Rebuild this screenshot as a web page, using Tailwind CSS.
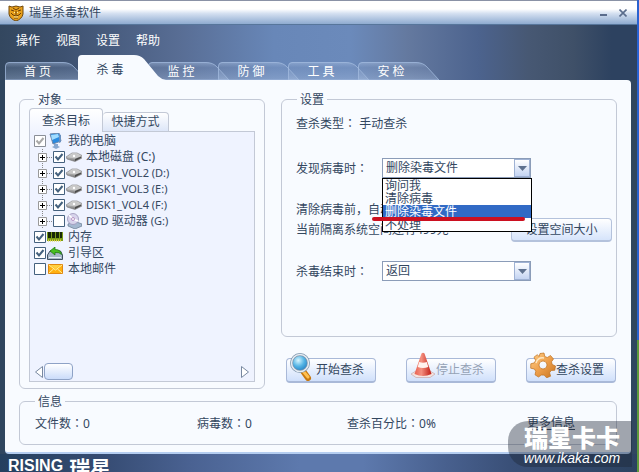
<!DOCTYPE html>
<html lang="zh-CN">
<head>
<meta charset="utf-8">
<title>瑞星杀毒软件</title>
<script src="https://cdn.jsdelivr.net/npm/@tailwindcss/browser@4"></script>
</head>
<body class="relative flex h-screen flex-col overflow-hidden border-r-2 border-[#2a62d0] bg-[#30465f] font-['Noto_Sans','Noto_Sans_CJK_SC',sans-serif] text-[12px] leading-4 text-[#33475f]">
<svg class="absolute h-0 w-0" aria-hidden="true">
  <defs>
    <linearGradient id="tabfill" x1="0" y1="0" x2="0" y2="1"><stop offset="0" stop-color="#a9bfe0" stop-opacity=".5"/><stop offset=".3" stop-color="#8fa6cc" stop-opacity=".22"/><stop offset="1" stop-color="#a9bfe0" stop-opacity=".4"/></linearGradient>
    <linearGradient id="disk" x1="0" y1="0" x2="0" y2="1"><stop offset="0" stop-color="#eee"/><stop offset="1" stop-color="#777"/></linearGradient>
    <radialGradient id="lens" cx=".4" cy=".35" r=".7"><stop offset="0" stop-color="#d8f6ff"/><stop offset=".5" stop-color="#54b4e4"/><stop offset="1" stop-color="#1c78c0"/></radialGradient>
    <linearGradient id="gear" x1="0" y1="0" x2="1" y2="1"><stop offset="0" stop-color="#ffd08a"/><stop offset=".5" stop-color="#eea04c"/><stop offset="1" stop-color="#c87420"/></linearGradient>
    <linearGradient id="cone" x1="0" y1="0" x2="1" y2="0"><stop offset="0" stop-color="#e86050"/><stop offset=".4" stop-color="#f49080"/><stop offset="1" stop-color="#c01c14"/></linearGradient>
    <symbol id="tab" viewBox="0 0 84 18"><path d="M.5 18V4Q.5 .5 4 .5H58Q65 .5 69 5L81 18Z" fill="url(#tabfill)" stroke="#a4bce0" stroke-opacity=".75"/></symbol>
    <symbol id="drive" viewBox="0 0 16 10"><path d="M0 5 6 1H11L16 3.500V6L9 9.500 1 7Z" fill="url(#disk)" stroke="#777" stroke-width=".6"/><path d="M1 5 6 2h5l4 2-6 2.500Z" fill="#c8c8c8"/><path d="M9 7v2l6-3V4.500Z" fill="#4c4c4c"/><circle cx="8" cy="4" r="1.200" fill="#fff"/></symbol>
    <symbol id="plus" viewBox="0 0 15 16"><path d="M4.500 0v16M9 8.500h5" stroke="#888" stroke-dasharray="1 1"/><path d="M.5 4.500h8v8h-8Z" fill="#fff" stroke="#999"/><path d="M2 8.500h5M4.500 6v5" stroke="#000"/></symbol>
    <symbol id="box" viewBox="0 0 12 12"><path d="M.5 .5h11v11H.5Z" fill="#fff" stroke="#44617e"/></symbol>
    <symbol id="ticked" viewBox="0 0 12 12"><path d="M.5 .5h11v11H.5Z" fill="#fff" stroke="#44617e"/><path d="M2.500 5.500 5 8.500 9.500 3" stroke="#44617e" stroke-width="2" fill="none"/></symbol>
  </defs>
</svg>

<header class="flex h-[25px] shrink-0 items-center gap-1 border-b border-t border-b-[#57769b] border-t-[#8a92a6] bg-linear-to-b from-white from-35% via-[#d3dff0] via-55% to-[#8fabd0] pl-2 pr-1.5">
  <svg class="h-4 w-4" viewBox="0 0 16 16"><path d="M1 1 4 2Q8 0 12 2L15 1V9Q14 14 8 16 2 14 1 9Z" fill="#e8a01c" stroke="#70480c"/><path d="M3 5 6 6M13 5 10 6M5 3l3 2 3-2M8 6v4M5 10l3 1 3-1M6 13h4M3 8l2 2M13 8l-2 2" stroke="#6b3f08" fill="none"/><path d="M6 7.500h1M9 7.500h1M6 12h4" stroke="#fff0a0"/></svg>
  <h1 class="pl-px">瑞星杀毒软件</h1>
  <button class="ml-auto flex h-4 w-4 items-center justify-center" aria-label="最小化"><span class="mt-1 h-0.5 w-[7px] bg-[#5a6c8c]"></span></button>
  <button class="flex h-4 w-4 items-center justify-center" aria-label="关闭"><svg class="h-2 w-2" viewBox="0 0 8 8"><path d="M.5 .5 7.500 7.500M7.500 .5 .5 7.500" stroke="#5a6c8c" stroke-width="1.600"/></svg></button>
</header>

<div class="flex h-[55px] shrink-0 flex-col justify-between bg-linear-[90deg,#33475f_0%,#3d5170_10%,#586d94_28%,#6887b8_43%,#6b8abb_55%,#64799f_64%,#4c638e_75%,#475873_83%,#3f5068_90%,#2d4260_96%]">
  <nav class="flex gap-4 pl-4 pt-2 text-white">
    <a href="#">操作</a><a href="#">视图</a><a href="#">设置</a><a href="#">帮助</a>
  </nav>
  <div class="flex items-end pl-[5px] text-white" role="tablist">
    <button role="tab" class="relative h-[18px] w-[73px] pr-2 pt-0.5"><svg class="absolute left-0 top-0 h-[18px] w-[84px]"><use href="#tab"/></svg><span class="relative">首 页</span></button>
    <button role="tab" aria-selected="true" class="relative z-10 h-[25px] w-[70px] pr-[6px] pt-1 text-[#33475f]"><svg class="absolute left-0 top-0 h-[26px] w-[88px]" viewBox="0 0 88 26"><path d="M0 26V4Q0 0 4 0H56Q62 0 66 4L80 21Q83 24 88 25V26Z" fill="#f8fbff"/></svg><span class="relative">杀 毒</span></button>
    <button role="tab" class="relative h-[18px] w-[70px] pr-1 pt-0.5"><svg class="absolute left-0 top-0 h-[18px] w-[84px]"><use href="#tab"/></svg><span class="relative">监 控</span></button>
    <button role="tab" class="relative h-[18px] w-[70px] pr-1 pt-0.5"><svg class="absolute left-0 top-0 h-[18px] w-[84px]"><use href="#tab"/></svg><span class="relative">防 御</span></button>
    <button role="tab" class="relative h-[18px] w-[70px] pr-1 pt-0.5"><svg class="absolute left-0 top-0 h-[18px] w-[84px]"><use href="#tab"/></svg><span class="relative">工 具</span></button>
    <button role="tab" class="relative h-[18px] w-[70px] pr-1 pt-0.5"><svg class="absolute left-0 top-0 h-[18px] w-[84px]"><use href="#tab"/></svg><span class="relative">安 检</span></button>
  </div>
</div>

<main class="ml-[5px] mr-[6px] flex flex-1 flex-col gap-[3px] rounded-b-sm rounded-tr-sm border-b-2 border-[#b4cdf0] bg-[#f8fbff] px-[14px] pb-[7px] pt-[10px]">
  <div class="flex flex-1 gap-4">
    <fieldset class="flex w-[246px] flex-col rounded-md border border-[#c3c9d6] px-[9px] pb-[6px]">
      <legend class="ml-[5px] px-1 pt-0.5">对象</legend>
      <div class="flex h-full flex-col">
        <div class="flex items-end" role="tablist">
          <button role="tab" aria-selected="true" class="relative z-10 -mb-px h-6 w-[74px] rounded-t border border-b-0 border-[#c3c9d6] bg-linear-to-b from-white to-[#f0f4ff]">查杀目标</button>
          <button role="tab" class="h-[19px] w-[66px] rounded-t border border-b-0 border-l-0 border-[#c3c9d6] bg-linear-to-b from-white to-[#dde6f8]">快捷方式</button>
        </div>
        <div class="flex flex-1 flex-col justify-between border border-[#c3c9d6] bg-[#eff3ff] px-1">
          <ul class="pt-px">
            <li class="flex h-4 items-center"><input id="pc" type="checkbox" checked class="absolute h-3 w-3 opacity-0"><svg class="h-3 w-3" viewBox="0 0 12 12"><path d="M.5 .5h11v11H.5Z" fill="#fff" stroke="#8a8f98"/><path d="M2.500 5.500 5 8.500 9.500 3" stroke="#a8a8a8" stroke-width="2" fill="none"/></svg>
              <svg class="ml-0.5 h-4 w-4" viewBox="0 0 16 16"><path d="M2 1 11 0 13 8 5 11Z" fill="#2a8be0" stroke="#7088a8"/><path d="M3 2 10 1 11 4 4 7Z" fill="#a0dcff"/><path d="M11 1l2 1v7l-2 1Z" fill="#6890c0"/><path d="M6 11h4v2l2 1-4 2-4-2 2-1Z" fill="#88a8d0"/></svg>
              <label for="pc" class="pl-1">我的电脑</label></li>
            <li class="flex h-4 items-center pl-1"><svg class="h-4 w-[15px]"><use href="#plus"/></svg><input id="c" type="checkbox" checked class="absolute h-3 w-3 opacity-0"><svg class="h-3 w-3"><use href="#ticked"/></svg><svg class="ml-px h-[10px] w-4"><use href="#drive"/></svg><label for="c" class="pl-1">本地磁盘 (C:)</label></li>
            <li class="flex h-4 items-center pl-1"><svg class="h-4 w-[15px]"><use href="#plus"/></svg><input id="d" type="checkbox" checked class="absolute h-3 w-3 opacity-0"><svg class="h-3 w-3"><use href="#ticked"/></svg><svg class="ml-px h-[10px] w-4"><use href="#drive"/></svg><label for="d" class="pl-1 text-[11px]">DISK1_VOL2 (D:)</label></li>
            <li class="flex h-4 items-center pl-1"><svg class="h-4 w-[15px]"><use href="#plus"/></svg><input id="e" type="checkbox" checked class="absolute h-3 w-3 opacity-0"><svg class="h-3 w-3"><use href="#ticked"/></svg><svg class="ml-px h-[10px] w-4"><use href="#drive"/></svg><label for="e" class="pl-1 text-[11px]">DISK1_VOL3 (E:)</label></li>
            <li class="flex h-4 items-center pl-1"><svg class="h-4 w-[15px]"><use href="#plus"/></svg><input id="f" type="checkbox" checked class="absolute h-3 w-3 opacity-0"><svg class="h-3 w-3"><use href="#ticked"/></svg><svg class="ml-px h-[10px] w-4"><use href="#drive"/></svg><label for="f" class="pl-1 text-[11px]">DISK1_VOL4 (F:)</label></li>
            <li class="flex h-4 items-center pl-1"><svg class="h-4 w-[15px]"><use href="#plus"/></svg><input id="g" type="checkbox" class="absolute h-3 w-3 opacity-0"><svg class="h-3 w-3"><use href="#box"/></svg><svg class="ml-px h-4 w-4" viewBox="0 0 16 16"><path d="M2 11 8 8l8 3v2l-7 3-7-3Z" fill="#a4b8d0" stroke="#66788f" stroke-width=".7"/><circle cx="7" cy="6" r="5.500" fill="#d8d4ec" stroke="#9a94b8" stroke-width=".8"/><path d="M7 6 3 2M7 6l5 2" stroke="#fff" stroke-width="1.500"/><circle cx="7" cy="6" r="1.500" fill="#fff" stroke="#a070b0" stroke-width=".7"/></svg><label for="g" class="pl-1"><span class="text-[11px]">DVD</span> 驱动器 <span class="text-[11px]">(G:)</span></label></li>
            <li class="flex h-4 items-center"><input id="mem" type="checkbox" checked class="absolute h-3 w-3 opacity-0"><svg class="h-3 w-3"><use href="#ticked"/></svg>
              <svg class="ml-px h-3 w-4" viewBox="0 0 16 12"><path d="M0 1h16v9H0Z" fill="#7a9c18"/><path d="M1 1h3v6H1ZM5 1h3v6H5ZM9 1h3v6H9ZM13 1h2v6h-2Z" fill="#182808"/><path d="M1 9.500h14" stroke="#e0d040" stroke-width="2" stroke-dasharray="1 1"/></svg><label for="mem" class="pl-[5px]">内存</label></li>
            <li class="flex h-4 items-center"><input id="boot" type="checkbox" checked class="absolute h-3 w-3 opacity-0"><svg class="h-3 w-3"><use href="#ticked"/></svg>
              <svg class="ml-px h-[13px] w-4" viewBox="0 0 16 13"><path d="M.5 8 3 4h10.500l2 4v4.500H.5Z" fill="#a8b8c8" stroke="#405060"/><path d="M2 10.500h12" stroke="#e8f0f8"/><path d="M3 4 8 0v2.500q6 0 6.500 5-2-2.500-6.500-2V8Z" fill="#48c020" stroke="#187008" stroke-width=".7"/></svg><label for="boot" class="pl-[5px]">引导区</label></li>
            <li class="flex h-4 items-center"><input id="mail" type="checkbox" class="absolute h-3 w-3 opacity-0"><svg class="h-3 w-3"><use href="#box"/></svg>
              <svg class="ml-0.5 h-3 w-[15px]" viewBox="0 0 15 12"><path d="M.5 1.500h14v9H.5Z" fill="#ffb010" stroke="#e08810"/><path d="M2 2h11L7.500 6Z" fill="#ffd040"/><path d="M1 2l6.500 5L14 2M1 10l4.500-4M14 10 9.500 6" fill="none" stroke="#fff0a0"/></svg><label for="mail" class="pl-[5px]">本地邮件</label></li>
          </ul>
          <div class="flex items-center pb-px">
            <svg class="h-3 w-[10px]" viewBox="0 0 10 12"><path d="M8.500 .5 1.500 6l7 5.500Z" fill="#fff" stroke="#7888a0"/></svg>
            <span class="h-[17px] w-[29px] rounded-sm border border-[#8ea2c6] bg-linear-to-b from-white to-[#cbdcfa]"></span>
            <svg class="ml-auto h-3 w-[10px]" viewBox="0 0 10 12"><path d="M1.500 .5 8.500 6l-7 5.500Z" fill="#fff" stroke="#7888a0"/></svg>
          </div>
        </div>
      </div>
    </fieldset>

    <div class="flex flex-1 flex-col justify-between">
      <fieldset class="h-[247px] rounded-md border border-[#c3c9d6] pl-[14px] pr-1">
        <legend class="ml-px px-[3px] pt-0.5">设置</legend>
        <p class="pt-[7px]">查杀类型<span lang="zh-Hant" class="font-['Noto_Sans_CJK_TC']">：</span> 手动查杀</p>
        <div class="mt-[26px] flex items-center">
          <label for="found" class="w-[86px]">发现病毒时<span lang="zh-Hant" class="font-['Noto_Sans_CJK_TC']">：</span></label>
          <div class="relative w-[149px]">
            <select id="found" class="block h-5 w-full appearance-none border border-[#8b9cb8] bg-white pl-[3px]"><option>删除染毒文件</option></select>
            <span class="pointer-events-none absolute inset-y-px right-px flex w-4 items-center justify-center border border-[#9fb2d4] bg-linear-to-b from-white to-[#c4d4f2]"><svg class="h-[5px] w-[9px]" viewBox="0 0 9 5"><path d="M0 0h9L4.500 5Z" fill="#5e718f"/></svg></span>
            <ul role="listbox" aria-label="发现病毒时" class="absolute left-0 top-5 z-20 w-[150px] border border-black bg-white leading-[13px]">
              <li role="option" class="h-[13px] pl-0.5">询问我</li>
              <li role="option" class="h-[13px] pl-0.5">清除病毒</li>
              <li role="option" aria-selected="true" class="h-[13px] bg-[#316ac5] pl-0.5 text-white">删除染毒文件</li>
              <li role="option" class="h-[13px] pl-0.5">不处理</li>
            </ul>
            <span class="absolute -left-[10px] top-[59px] z-30 h-1 w-[153px] rounded-full bg-[#cc1020]"></span>
          </div>
        </div>
        <p class="mt-6">清除病毒前，自动备份到隔离区</p>
        <div class="flex h-6 items-center">
          <p>当前隔离系统空间还有499兆</p>
          <button class="ml-auto h-6 w-[101px] rounded border border-b-2 border-[#b4c2dc] bg-linear-to-b from-white to-[#d6e4fb]">设置空间大小</button>
        </div>
        <div class="mt-[19px] flex items-center">
          <label for="finish" class="w-[86px]">杀毒结束时<span lang="zh-Hant" class="font-['Noto_Sans_CJK_TC']">：</span></label>
          <div class="relative w-[149px]">
            <select id="finish" class="block h-5 w-full appearance-none border border-[#8b9cb8] bg-white pl-[3px]"><option>返回</option></select>
            <span class="pointer-events-none absolute inset-y-px right-px flex w-4 items-center justify-center border border-[#9fb2d4] bg-linear-to-b from-white to-[#c4d4f2]"><svg class="h-[5px] w-[9px]" viewBox="0 0 9 5"><path d="M0 0h9L4.500 5Z" fill="#5e718f"/></svg></span>
          </div>
        </div>
      </fieldset>
      <div class="flex justify-between pb-[6px] pl-[5px] pr-px">
        <button class="relative h-[25px] w-[90px] rounded border border-b-2 border-[#a9b9d8] bg-linear-to-b from-white to-[#d0e0fb] pl-[18px]">
          <svg class="absolute bottom-0 left-0.5 h-7 w-6" viewBox="0 0 24 28"><path d="M14 18 19 25" stroke="#c87810" stroke-width="6" stroke-linecap="round"/><path d="M14 18 19 24" stroke="#ffc050" stroke-width="3" stroke-linecap="round"/><circle cx="11" cy="10" r="8.500" fill="url(#lens)" stroke="#8097ad" stroke-width="3"/><circle cx="11" cy="10" r="8.500" fill="none" stroke="#e6edf4" stroke-width="1.500"/></svg>开始查杀</button>
        <button disabled class="relative h-[25px] w-[90px] rounded border border-b-2 border-[#a9b9d8] bg-linear-to-b from-white to-[#d0e0fb] pl-[18px] text-[#95a2b5]">
          <svg class="absolute bottom-[3px] left-1 h-[26px] w-6" viewBox="0 0 24 26"><path d="M0 22 5 19h14l5 3-5 3.500H5Z" fill="#f4e4e0" stroke="#c8a8a8" stroke-width=".7"/><path d="M10.500 1.500Q12 0 13.500 1.500L20.500 22q-8.500 4-17 0Z" fill="url(#cone)"/><path d="M8.200 10q3.800 1.500 7.600 0l1.500 5q-5.300 2-10.600 0Z" fill="#fff2ee"/></svg>停止查杀</button>
        <button class="relative h-[25px] w-[90px] rounded border border-b-2 border-[#a9b9d8] bg-linear-to-b from-white to-[#d0e0fb] pl-[18px]">
          <svg class="absolute bottom-[3px] left-[3px] h-[26px] w-[26px]" viewBox="0 0 26 26"><path fill="url(#gear)" stroke="#bf701c" stroke-width=".7" fill-rule="evenodd" d="M10 1.500 14 1l.8 3.500 2.500 1L20.500 3.500 23.500 7l-2 2.800.7 2.700 3.300 1.500-.7 4.300-3.600.2-1.600 2.200 1 3.500-4 1.600-2.500-2.700h-2.800L8.500 25 5 22.800l.8-3.500-1.400-2.300-3.700-.8L.8 11.800l3.600-1 1.200-2.400L4 5.200 7.200 2.700l2 1.800ZM13 9a4 4 0 1 0 .01 0Z"/><path d="M6 11q2-6 8-5" stroke="#ffe8c0" stroke-width="1.500" fill="none"/></svg>查杀设置</button>
      </div>
    </div>
  </div>

  <fieldset class="h-[53px] rounded-md border border-[#c3c9d6] pl-[15px] pr-[37px]">
    <legend class="px-[3px] pt-0.5">信息</legend>
    <div class="grid grid-cols-[162fr_150fr_180fr_52fr] pt-[5px]">
      <span>文件数<span lang="zh-Hant" class="font-['Noto_Sans_CJK_TC']">：</span>0</span><span>病毒数<span lang="zh-Hant" class="font-['Noto_Sans_CJK_TC']">：</span>0</span><span>查杀百分比<span lang="zh-Hant" class="font-['Noto_Sans_CJK_TC']">：</span>0%</span><a href="#" class="justify-self-start whitespace-nowrap underline underline-offset-2">更多信息</a>
    </div>
  </fieldset>
</main>

<footer class="flex h-[18px] shrink-0 items-start gap-1.5 overflow-hidden bg-linear-[90deg,#24405f_0%,#344a70_15%,#4a6292_30%,#5d79ad_47%,#5d79ad_57%,#48608e_70%,#3a5078_80%,#2c4260_100%] pl-2 pt-0.5 text-white">
  <span class="font-['Liberation_Sans',sans-serif] text-[16px] font-bold leading-5">RISING</span>
  <span class="text-[21px] font-bold leading-6">瑞星</span>
</footer>

<div class="fixed bottom-0 right-0 h-[132px] w-0.5 bg-[#5f9a3c]"></div>

<div class="absolute bottom-[5px] right-[5px] z-30 flex h-[46px] w-[124px] flex-col items-center justify-center rounded-l-[20px] bg-[#1c2634]/40 pl-1 pt-1 text-white">
  <strong class="text-[24px] font-black leading-6">瑞星卡卡</strong>
  <em class="font-['Liberation_Sans',sans-serif] text-[14px] leading-4">www.ikaka.com</em>
</div>
</body>
</html>
